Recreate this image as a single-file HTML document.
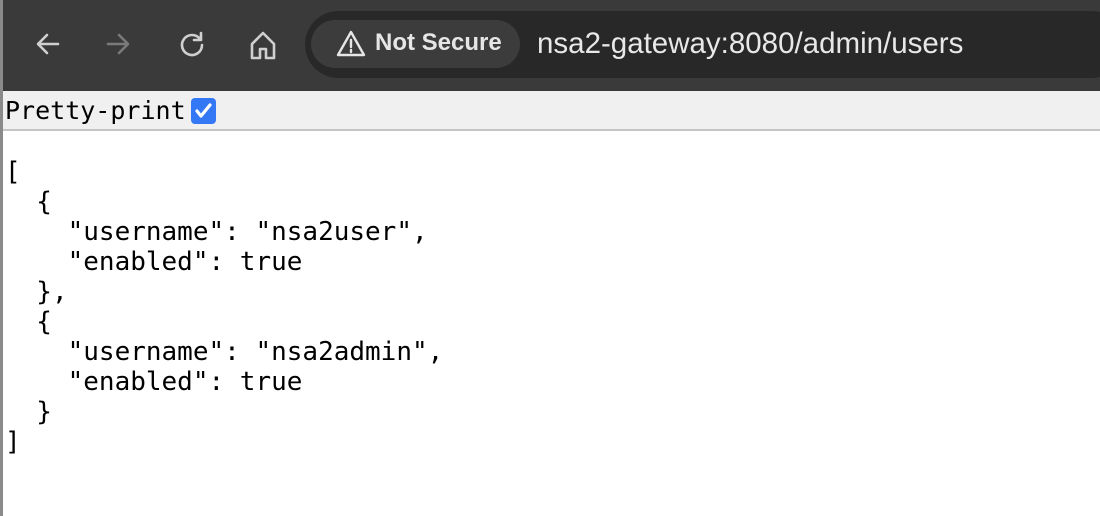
<!DOCTYPE html>
<html><head><style>
*{margin:0;padding:0;box-sizing:border-box}
html,body{width:1100px;height:516px;overflow:hidden;background:#fff}
.tb{position:absolute;left:0;top:0;width:1100px;height:91px;background:#3a3a3a}
.edge{position:absolute;left:0;top:0;width:3px;height:516px;background:#8a8a8a}
.addr{position:absolute;left:305px;top:11px;width:820px;height:67px;border-radius:34px;background:#282828}
.chip{position:absolute;left:311px;top:20px;width:209px;height:48px;border-radius:24px;background:#3c3c3c}
.ns{position:absolute;left:375px;top:29px;font:600 24px "Liberation Sans",sans-serif;color:#e6e6e6}
.url{position:absolute;left:537px;top:27px;font:29.5px "Liberation Sans",sans-serif;color:#e8e8e8}
.pp{position:absolute;left:3px;top:91px;width:1097px;height:40px;background:#f0f0f0;border-bottom:2px solid #c4c4c4}
.ppt{position:absolute;left:5px;top:96px;font:25px "DejaVu Sans Mono",monospace;color:#000}
.cb{position:absolute;left:191px;top:98px;width:25px;height:26px;border-radius:4px;background:#3478f6}
pre{position:absolute;left:5px;top:157px;font:26px/30px "DejaVu Sans Mono",monospace;color:#000}
svg{position:absolute}
</style></head><body>
<div class="tb"></div>
<svg style="left:34px;top:30px" width="28" height="28" viewBox="0 0 28 28" fill="none" stroke="#d0d0d0" stroke-width="2.6" stroke-linecap="round" stroke-linejoin="round"><path d="M24 14H5M13 5l-9 9 9 9"/></svg>
<svg style="left:104px;top:30px" width="28" height="28" viewBox="0 0 28 28" fill="none" stroke="#7a7a7a" stroke-width="2.6" stroke-linecap="round" stroke-linejoin="round"><path d="M4 14h19M15 5l9 9-9 9"/></svg>
<svg style="left:178px;top:30px" width="28" height="28" viewBox="0 0 28 28" fill="none" stroke="#d0d0d0" stroke-width="2.6" stroke-linecap="round" stroke-linejoin="round"><path d="M22 9A10 10 0 1 0 24 15"/><path d="M23 3v7h-7"/></svg>
<svg style="left:248px;top:30px" width="30" height="30" viewBox="0 0 30 30" fill="none" stroke="#d0d0d0" stroke-width="2.6" stroke-linejoin="round"><path d="M4 14L15 3l11 11v14h-8v-9h-6v9H4z"/></svg>
<div class="addr"></div>
<div class="chip"></div>
<svg style="left:336px;top:30px" width="30" height="27" viewBox="0 0 30 27" fill="none" stroke="#e6e6e6" stroke-width="2.4" stroke-linejoin="round"><path d="M15 2L28 25H2z"/><path d="M15 10v7M15 20v2" stroke-linecap="round"/></svg>
<div class="ns">Not Secure</div>
<div class="url">nsa2-gateway:8080/admin/users</div>
<div class="pp"></div>
<div class="ppt">Pretty-print</div>
<div class="cb"></div>
<svg style="left:194px;top:102px" width="19" height="18" viewBox="0 0 19 18" fill="none" stroke="#fff" stroke-width="3.2" stroke-linecap="round" stroke-linejoin="round"><path d="M3 9l4 5 9-11"/></svg>
<div class="edge"></div>
<pre>[
  {
    "username": "nsa2user",
    "enabled": true
  },
  {
    "username": "nsa2admin",
    "enabled": true
  }
]</pre>
</body></html>
